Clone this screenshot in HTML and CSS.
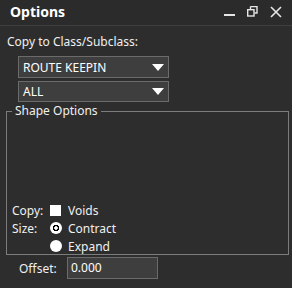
FILE: index.html
```html
<!DOCTYPE html>
<html>
<head>
<meta charset="utf-8">
<link rel="stylesheet" href="styles.css">
</head>
<body>
<div class="panel">
  <div class="titlebar">
    <span class="title">Options</span>
    <div class="winbtns">
      <svg class="wb" width="12" height="12" viewBox="0 0 12 12"><rect x="0" y="8" width="11" height="2" fill="#e6e6e6"/></svg>
      <svg class="wb" width="12" height="12" viewBox="0 0 12 12"><path d="M3.5 0.5h6.5v6.5h-2.5M3.5 0.5v2.5" fill="none" stroke="#e6e6e6" stroke-width="1.4"/><rect x="0.7" y="3.7" width="6.3" height="6.3" fill="none" stroke="#e6e6e6" stroke-width="1.4"/></svg>
      <svg class="wb" width="12" height="12" viewBox="0 0 12 12"><path d="M1 1L11 11M11 1L1 11" stroke="#e6e6e6" stroke-width="1.6"/></svg>
    </div>
  </div>
  <div class="content">
    <div class="caption">Copy to Class/Subclass:</div>
    <div class="combo first"><span>ROUTE KEEPIN</span><span class="arrow"></span></div>
    <div class="combo second"><span>ALL</span><span class="arrow"></span></div>
    <fieldset class="group">
      <legend>Shape Options</legend>
      <div class="gbody">
        <div class="opts">
          <div class="row"><span class="lbl">Copy:</span><span class="check"></span><span>Voids</span></div>
          <div class="row"><span class="lbl">Size:</span><span class="radio on"></span><span>Contract</span></div>
          <div class="row"><span class="lbl"></span><span class="radio"></span><span>Expand</span></div>
        </div>
      </div>
    </fieldset>
    <div class="offset"><span class="olbl">Offset:</span><div class="input">0.000</div></div>
  </div>
</div>
</body>
</html>
```
FILE: styles.css
```css
html, body { margin: 0; padding: 0; background: #2d2d2d; }
body { width: 292px; height: 288px; overflow: hidden; font-family: "Noto Sans", "Open Sans", sans-serif; font-size: 12px; color: #f0f0f0; }
.panel { display: flex; flex-direction: column; height: 288px; }
.titlebar { height: 26px; box-sizing: border-box; border-bottom: 1px solid #3f3f3f; background: #2b2b2b; display: flex; align-items: center; padding-left: 10px; padding-right: 10px; }
.title { font-weight: bold; font-size: 14px; color: #fff; flex: 1; line-height: 26px; margin-top: -2px; }
.winbtns { display: flex; gap: 11px; align-items: center; margin-top: -1px; }
.wb { display: block; }
.content { display: flex; flex-direction: column; }
.caption { margin: 8px 0 0 7px; line-height: 16px; }
.combo { margin-left: 18px; width: 151px; height: 22px; box-sizing: border-box; border: 1px solid #6b6b6b; background: #3e3e3e; display: flex; align-items: center; justify-content: space-between; padding: 0 4px 0 4px; color: #fff; }
.combo.first { margin-top: 6px; }
.combo.second { margin-top: 3px; height: 21px; }
.arrow { width: 0; height: 0; border-left: 6px solid transparent; border-right: 6px solid transparent; border-top: 7px solid #fff; }
.group { margin: 2px 0 0 6px; width: 283px; height: 151px; box-sizing: border-box; border: 1px solid #7c7c7c; padding: 0; min-width: 0; }
.group legend { margin-left: 5px; padding: 0 3px 0 3px; line-height: 14px; color: #f0f0f0; }
.gbody { height: 136px; display: flex; flex-direction: column; justify-content: flex-end; }
.opts { display: flex; flex-direction: column; padding: 0 0 0 5px; margin-bottom: -1px; }
.row { display: flex; align-items: center; height: 18px; }
.lbl { width: 38px; }
.check { width: 11px; height: 11px; background: #fff; margin-right: 7px; }
.radio { width: 12px; height: 12px; border-radius: 50%; background: #fff; margin-right: 6px; box-sizing: border-box; }
.radio.on { background: radial-gradient(circle, #fff 0 1.5px, #000 2px 3px, #fff 3.5px); }
.offset { display: flex; align-items: center; margin-top: 2px; }
.olbl { margin-left: 19px; width: 48px; }
.input { width: 91px; height: 22px; box-sizing: border-box; border: 1px solid #6b6b6b; background: #3e3e3e; padding-left: 3px; line-height: 20px; color: #fff; }
```
